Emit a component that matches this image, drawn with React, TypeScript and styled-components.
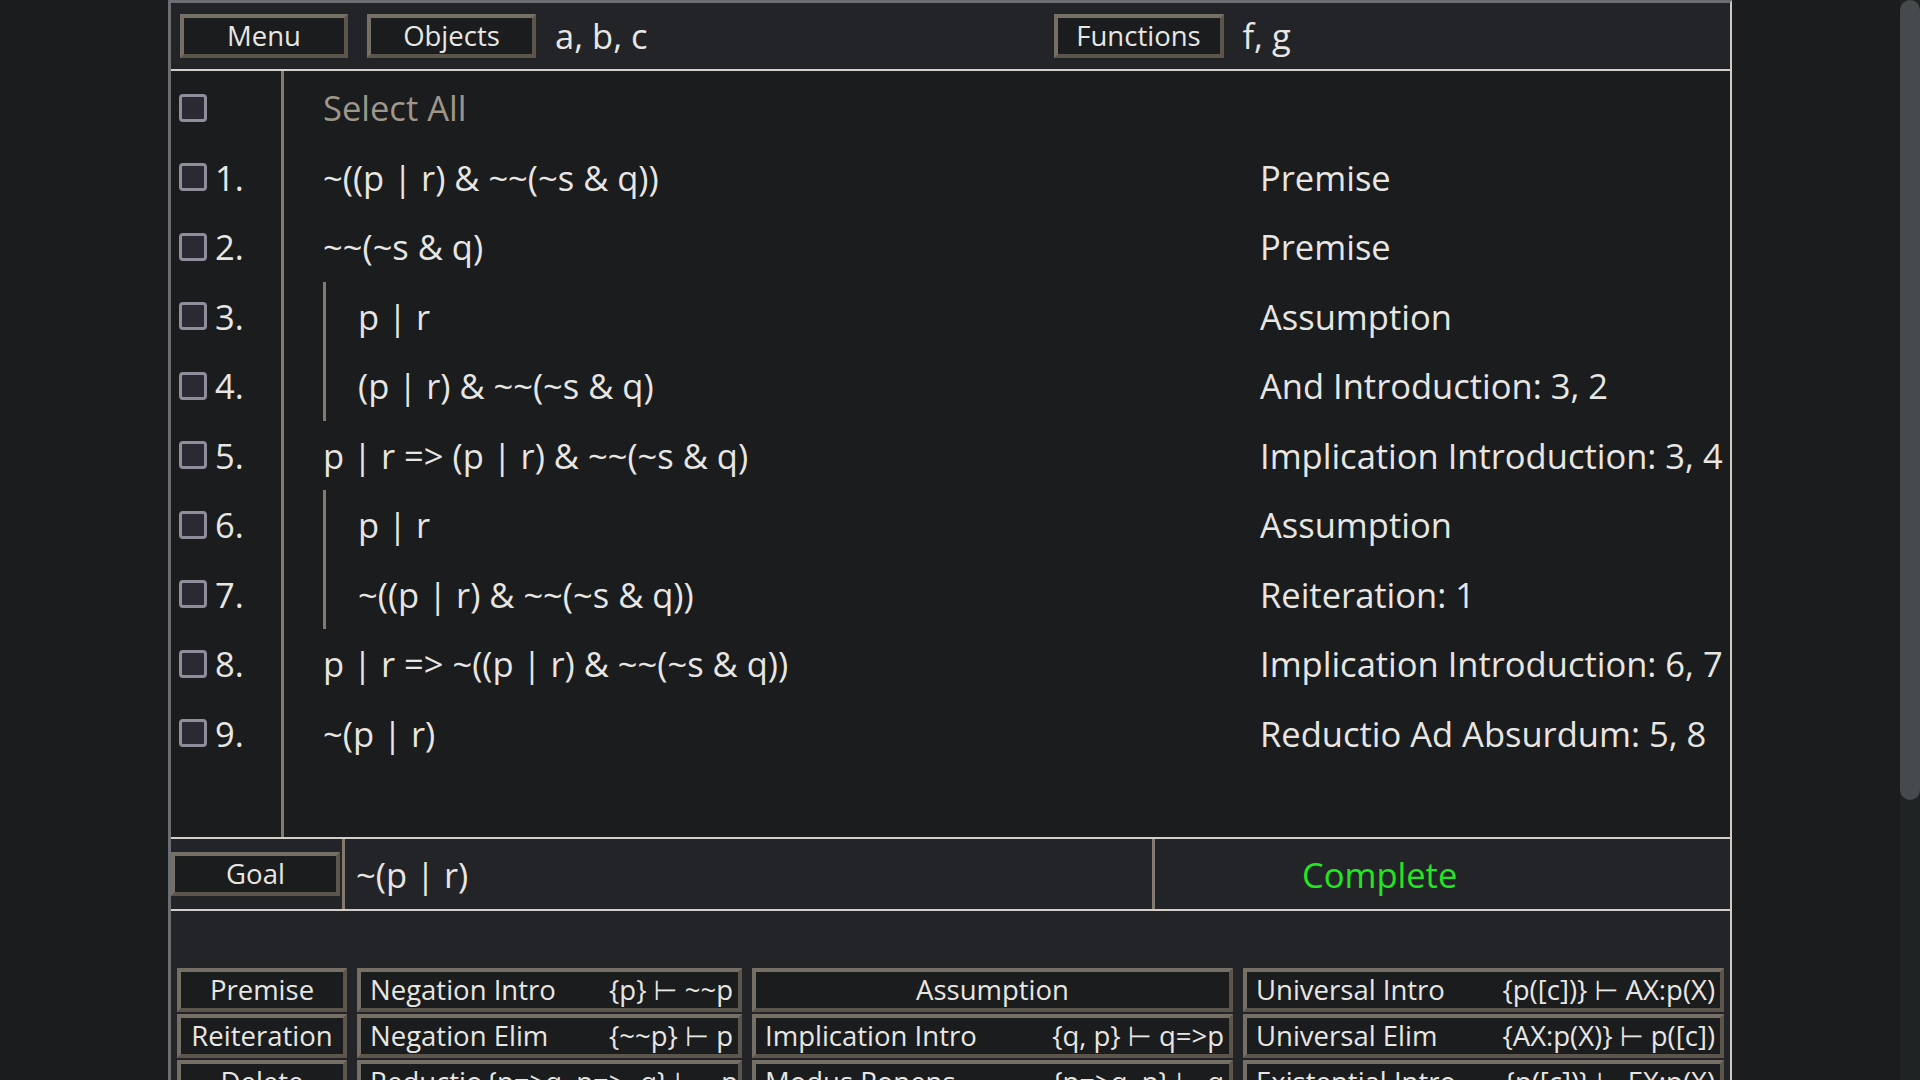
import React from "react";
import styled, { createGlobalStyle } from "styled-components";

const GlobalStyle = createGlobalStyle`
  html, body {
    margin: 0;
    height: 100%;
    overflow: hidden;
    background: #1a1c1e;
  }
  body {
    color: #e8e6e3;
    font-family: "Open Sans", "DejaVu Sans", sans-serif;
  }
`;

const Shell = styled.div`
  height: 100vh;
  display: flex;
  background: #1a1c1e;
`;

const Viewport = styled.div`
  flex: 1;
  min-width: 0;
  overflow-y: auto;
  scrollbar-width: none;
  &::-webkit-scrollbar {
    display: none;
  }
`;

const ScrollRail = styled.div`
  width: 20px;
  flex: none;
  background: #202324;
`;

const ScrollThumb = styled.div`
  height: 800px;
  border-radius: 10px;
  background: #454a4d;
`;

const Frame = styled.div`
  width: 1564px;
  margin: 0 auto;
  box-sizing: border-box;
  border-top: 3px solid #6b6f73;
  border-left: 3px solid #6b6f73;
  border-right: 2px solid #cfcbc4;
  display: flex;
  flex-direction: column;
`;

const Header = styled.header`
  height: 66px;
  display: flex;
  align-items: center;
  gap: 19px;
  padding: 0 9px;
  background: #222427;
  border-bottom: 2px solid #d4d0c9;
`;

const HeaderSection = styled.div`
  flex: 1;
  display: flex;
  align-items: center;
  gap: 19px;
`;

const Btn = styled.button<{ $split?: boolean; $w?: number }>`
  box-sizing: border-box;
  height: 44px;
  width: ${(p) => (p.$w ? `${p.$w}px` : "100%")};
  min-width: 0;
  flex: none;
  margin: 0;
  padding: ${(p) => (p.$split ? "0 5px 0 9px" : "0 4px")};
  background: #1a1c1e;
  color: #e8e6e3;
  border: 4px solid;
  border-color: #766f65 #5b554c #5b554c #766f65;
  font-family: "Open Sans", "DejaVu Sans", sans-serif;
  font-size: 27.5px;
  line-height: 1;
  display: flex;
  align-items: center;
  justify-content: ${(p) => (p.$split ? "space-between" : "center")};
  gap: 4px;
  white-space: nowrap;
  overflow: hidden;
  cursor: pointer;
`;

const SetText = styled.span`
  font-size: 34.5px;
  line-height: 1;
  white-space: nowrap;
`;

const ProofArea = styled.section`
  height: 768px;
  box-sizing: border-box;
  display: flex;
  background: #1a1c1e;
  border-bottom: 2px solid #d4d0c9;
`;

const NumColumn = styled.div`
  width: 113px;
  box-sizing: border-box;
  padding-top: 2px;
  border-right: 3px solid #827a6f;
  display: flex;
  flex-direction: column;
`;

const MainColumn = styled.div`
  flex: 1;
  min-width: 0;
  padding-top: 2px;
  display: flex;
  flex-direction: column;
`;

const NumRow = styled.div`
  height: 69.5px;
  display: flex;
  align-items: center;
  gap: 8px;
  padding-left: 8px;
  font-size: 34.5px;
`;

const Check = styled.span`
  width: 28px;
  height: 28px;
  box-sizing: border-box;
  border: 3px solid #8f8d9b;
  border-radius: 4px;
  background: #2b2a33;
  flex: none;
`;

const LineRow = styled.div`
  height: 69.5px;
  display: grid;
  grid-template-columns: 976px minmax(0, 1fr);
  font-size: 34.5px;
`;

const FormulaCell = styled.div<{ $muted?: boolean }>`
  display: flex;
  align-items: stretch;
  padding-left: 39px;
  color: ${(p) => (p.$muted ? "#9e9689" : "#e8e6e3")};
`;

const Bar = styled.span`
  width: 32px;
  flex: none;
  border-left: 3px solid #827a6f;
`;

const Text = styled.span`
  display: flex;
  align-items: center;
  white-space: pre;
`;

const JustCell = styled.div`
  display: flex;
  align-items: center;
  white-space: nowrap;
  overflow: hidden;
`;

const GoalRow = styled.section`
  height: 70px;
  display: grid;
  grid-template-columns: 174px 810px minmax(0, 1fr);
  background: #222427;
  border-bottom: 2px solid #d4d0c9;
`;

const GoalCell = styled.div`
  display: flex;
  align-items: center;
  padding-right: 2px;
  border-right: 3px solid #827a6f;
`;

const GoalFormula = styled.div`
  display: flex;
  align-items: center;
  padding-left: 11px;
  font-size: 34.5px;
  white-space: pre;
  border-right: 3px solid #827a6f;
`;

const Status = styled.div`
  display: flex;
  align-items: center;
  padding-left: 147px;
  font-size: 34.5px;
  color: #22e622;
`;

const RulePanel = styled.section`
  background: #222427;
  padding: 57px 6px 120px;
  display: grid;
  grid-template-columns: 170px 385px minmax(0, 1fr) minmax(0, 1fr);
  gap: 10px;
  align-items: start;
`;

const RuleColumn = styled.div`
  min-width: 0;
  display: flex;
  flex-direction: column;
  gap: 2px;
`;

const RuleName = styled.span``;
const RuleForm = styled.span`
  white-space: pre;
`;

type Line = { n: number; f: string; j: string; d: number };

const lines: Line[] = [
  { n: 1, f: "~((p | r) & ~~(~s & q))", j: "Premise", d: 0 },
  { n: 2, f: "~~(~s & q)", j: "Premise", d: 0 },
  { n: 3, f: "p | r", j: "Assumption", d: 1 },
  { n: 4, f: "(p | r) & ~~(~s & q)", j: "And Introduction: 3, 2", d: 1 },
  { n: 5, f: "p | r => (p | r) & ~~(~s & q)", j: "Implication Introduction: 3, 4", d: 0 },
  { n: 6, f: "p | r", j: "Assumption", d: 1 },
  { n: 7, f: "~((p | r) & ~~(~s & q))", j: "Reiteration: 1", d: 1 },
  { n: 8, f: "p | r => ~((p | r) & ~~(~s & q))", j: "Implication Introduction: 6, 7", d: 0 },
  { n: 9, f: "~(p | r)", j: "Reductio Ad Absurdum: 5, 8", d: 0 },
];

type Rule = [string, string?];

const ruleColumns: Rule[][] = [
  [["Premise"], ["Reiteration"], ["Delete"]],
  [
    ["Negation Intro", "{p} ⊢ ~~p"],
    ["Negation Elim", "{~~p} ⊢ p"],
    ["Reductio", "{p=>q, p=>~q} ⊢ ~p"],
    ["And Intro", "{p, q} ⊢ p & q"],
    ["And Elim", "{p & q} ⊢ p"],
    ["Or Intro", "{p} ⊢ p | q"],
    ["Or Elim", "{p | q, ~p} ⊢ q"],
  ],
  [
    ["Assumption"],
    ["Implication Intro", "{q, p} ⊢ q=>p"],
    ["Modus Ponens", "{p=>q, p} ⊢ q"],
    ["Modus Tollens", "{p=>q, ~q} ⊢ ~p"],
    ["Biconditional Intro", "{p=>q, q=>p} ⊢ p<=>q"],
    ["Biconditional Elim", "{p<=>q} ⊢ p=>q"],
  ],
  [
    ["Universal Intro", "{p([c])} ⊢ AX:p(X)"],
    ["Universal Elim", "{AX:p(X)} ⊢ p([c])"],
    ["Existential Intro", "{p([c])} ⊢ EX:p(X)"],
    ["Existential Elim", "{EX:p(X)} ⊢ p([c])"],
    ["Equality Intro", "{} ⊢ [c]=[c]"],
    ["Equality Elim", "{[c]=[d], p([c])} ⊢ p([d])"],
  ],
];

export default function App() {
  return (
    <Shell>
      <GlobalStyle />
      <Viewport>
        <Frame>
          <Header>
            <Btn $w={168}>Menu</Btn>
            <HeaderSection>
              <Btn $w={169}>Objects</Btn>
              <SetText>a, b, c</SetText>
            </HeaderSection>
            <HeaderSection>
              <Btn $w={170}>Functions</Btn>
              <SetText>f, g</SetText>
            </HeaderSection>
          </Header>

          <ProofArea>
            <NumColumn>
              <NumRow>
                <Check />
              </NumRow>
              {lines.map((l) => (
                <NumRow key={l.n}>
                  <Check />
                  <span>{l.n}.</span>
                </NumRow>
              ))}
            </NumColumn>
            <MainColumn>
              <LineRow>
                <FormulaCell $muted>
                  <Text>Select All</Text>
                </FormulaCell>
                <JustCell />
              </LineRow>
              {lines.map((l) => (
                <LineRow key={l.n}>
                  <FormulaCell>
                    {Array.from({ length: l.d }).map((_, i) => (
                      <Bar key={i} />
                    ))}
                    <Text>{l.f}</Text>
                  </FormulaCell>
                  <JustCell>{l.j}</JustCell>
                </LineRow>
              ))}
            </MainColumn>
          </ProofArea>

          <GoalRow>
            <GoalCell>
              <Btn>Goal</Btn>
            </GoalCell>
            <GoalFormula>~(p | r)</GoalFormula>
            <Status>Complete</Status>
          </GoalRow>

          <RulePanel>
            {ruleColumns.map((col, ci) => (
              <RuleColumn key={ci}>
                {col.map(([name, form]) => (
                  <Btn key={name} $split={!!form}>
                    <RuleName>{name}</RuleName>
                    {form && <RuleForm>{form}</RuleForm>}
                  </Btn>
                ))}
              </RuleColumn>
            ))}
          </RulePanel>
        </Frame>
      </Viewport>
      <ScrollRail>
        <ScrollThumb />
      </ScrollRail>
    </Shell>
  );
}
